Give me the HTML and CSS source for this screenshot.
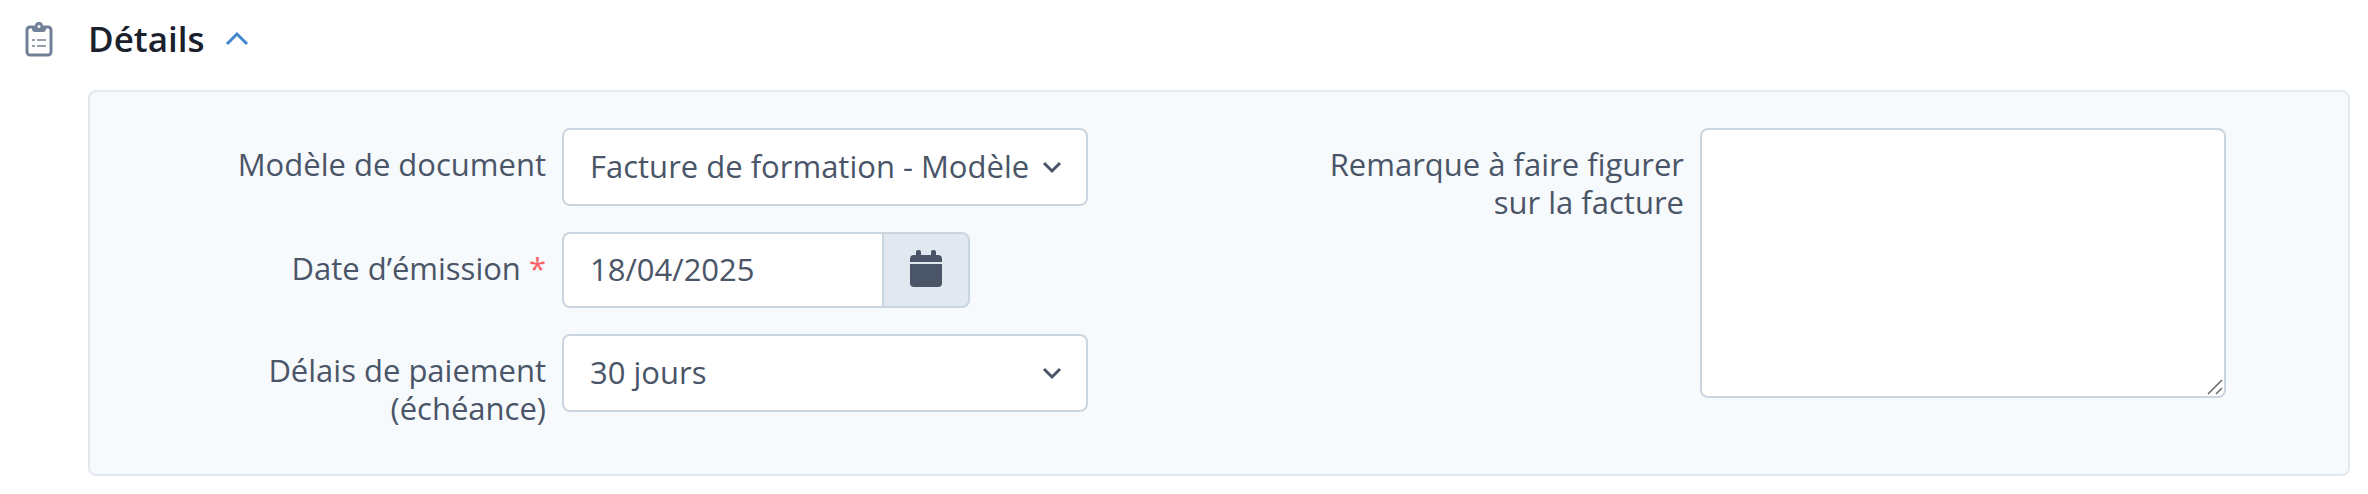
FILE: index.html
```html
<!DOCTYPE html>
<html lang="fr">
<head>
<meta charset="utf-8">
<meta name="viewport" content="width=device-width, initial-scale=1">
<title>Détails</title>
<link rel="stylesheet" href="styles.css">
</head>
<body>
<section class="section">
  <svg class="section-icon" viewBox="0 0 28 36" aria-hidden="true">
    <rect x="2" y="6" width="24" height="28" rx="3" fill="none" stroke="currentColor" stroke-width="3"/>
    <path d="M7 5h3a4 4 0 0 1 8 0h3v3q0 3-3 3h-8q-3 0-3-3z" fill="currentColor"/>
    <circle cx="14" cy="5.500" r="1.500" fill="#fff"/>
    <path d="M7 19h3M12 19h9M7 25h3M12 25h9" stroke="currentColor" stroke-width="2" opacity=".75"/>
  </svg>
  <div class="section-main">
    <h2 class="section-title">
      <button class="toggle" type="button" aria-expanded="true" aria-controls="details">
        Détails
        <svg class="toggle-icon" viewBox="0 0 24 16" aria-hidden="true"><path d="M2 13 12 3l10 10" fill="none" stroke="currentColor" stroke-width="3"/></svg>
      </button>
    </h2>
    <form class="panel" id="details">
      <div class="column">
        <div class="field">
          <label class="label" for="template">Modèle de document</label>
          <div class="control">
            <select class="input" id="template"><option>Facture de formation - Modèle</option></select>
            <svg class="chevron" viewBox="0 0 20 14" aria-hidden="true"><path d="m2 3 8 8 8-8" fill="none" stroke="currentColor" stroke-width="3"/></svg>
          </div>
        </div>
        <div class="field">
          <label class="label" for="date">Date d’émission <span class="required">*</span></label>
          <div class="control date">
            <input class="input date-input" id="date" type="text" value="18/04/2025" required>
            <button class="date-button" type="button" aria-label="Choisir une date">
              <svg class="calendar" viewBox="0 0 32 38" aria-hidden="true"><path d="M0 12V9q0-4 4-4h2V2q0-2 2-2h1q2 0 2 2v3h10V2q0-2 2-2h1q2 0 2 2v3h2q4 0 4 4v3zM0 14h32v19q0 4-4 4H4q-4 0-4-4z" fill="currentColor"/></svg>
            </button>
          </div>
        </div>
        <div class="field">
          <label class="label" for="delay">Délais de paiement (échéance)</label>
          <div class="control">
            <select class="input" id="delay"><option>30 jours</option></select>
            <svg class="chevron" viewBox="0 0 20 14" aria-hidden="true"><path d="m2 3 8 8 8-8" fill="none" stroke="currentColor" stroke-width="3"/></svg>
          </div>
        </div>
      </div>
      <div class="column">
        <div class="field">
          <label class="label" for="remark">Remarque à faire figurer sur la facture</label>
          <div class="control">
            <textarea class="input remark" id="remark"></textarea>
            <svg class="grip" viewBox="0 0 16 16" aria-hidden="true"><path d="M1 15 15 1M9 15l6-6" stroke="#666" stroke-width="1.500"/></svg>
          </div>
        </div>
      </div>
    </form>
  </div>
</section>
</body>
</html>
```
FILE: styles.css
```css
*, *::before, *::after { box-sizing: border-box; }
body {
  margin: 0;
  background: #fff;
  color: #4a5568;
  font: 31px/38px "Open Sans", sans-serif;
}
.section { display: flex; gap: 35px; padding: 14px 18px 18px 25px; }
.section-icon { flex: none; width: 28px; height: 36px; margin-top: 7px; color: #718096; }
.section-main { flex: 1; min-width: 0; }
.section-title { margin: 0 0 26px; font-size: 35px; line-height: 50px; }
.toggle {
  display: flex;
  align-items: center;
  gap: 20px;
  padding: 0;
  border: 0;
  background: none;
  color: #1a202c;
  font: inherit;
  font-weight: 600;
  cursor: pointer;
}
.toggle-icon { width: 24px; height: 16px; color: #4285d0; }
.panel {
  display: grid;
  grid-template-columns: 1fr 1fr;
  gap: 90px;
  padding: 36px 36px 47px;
  border: 2px solid #e2e8f0;
  border-radius: 8px;
  background: #f7fafc;
}
.column { display: flex; flex-direction: column; gap: 26px; }
.field { display: grid; grid-template-columns: 420fr 526fr 70fr; gap: 16px; align-items: start; }
.label { padding: 17px 0 0 50px; text-align: right; }
.required { color: #f56565; }
.control { position: relative; display: flex; }
.input {
  appearance: none;
  width: 100%;
  height: 78px;
  margin: 0;
  padding: 0 26px 2px;
  border: 2px solid #cbd5e0;
  border-radius: 8px;
  background: #fff;
  color: inherit;
  font: inherit;
}
.chevron { position: absolute; top: 32px; right: 26px; width: 20px; height: 14px; pointer-events: none; }
.date { width: 408px; height: 76px; }
.date-input { flex: 1; min-width: 0; height: 76px; border-radius: 8px 0 0 8px; border-right: 0; }
.date-button {
  display: flex;
  align-items: center;
  justify-content: center;
  width: 88px;
  padding: 0 0 2px;
  border: 2px solid #cbd5e0;
  border-radius: 0 8px 8px 0;
  background: #e2e8f0;
  color: #4a5568;
}
.calendar { width: 32px; height: 38px; }
.remark { height: 270px; padding: 16px 26px; resize: both; }
.remark::-webkit-resizer { background: transparent; }
.grip { position: absolute; right: 3px; bottom: 3px; width: 16px; height: 16px; pointer-events: none; }
```
